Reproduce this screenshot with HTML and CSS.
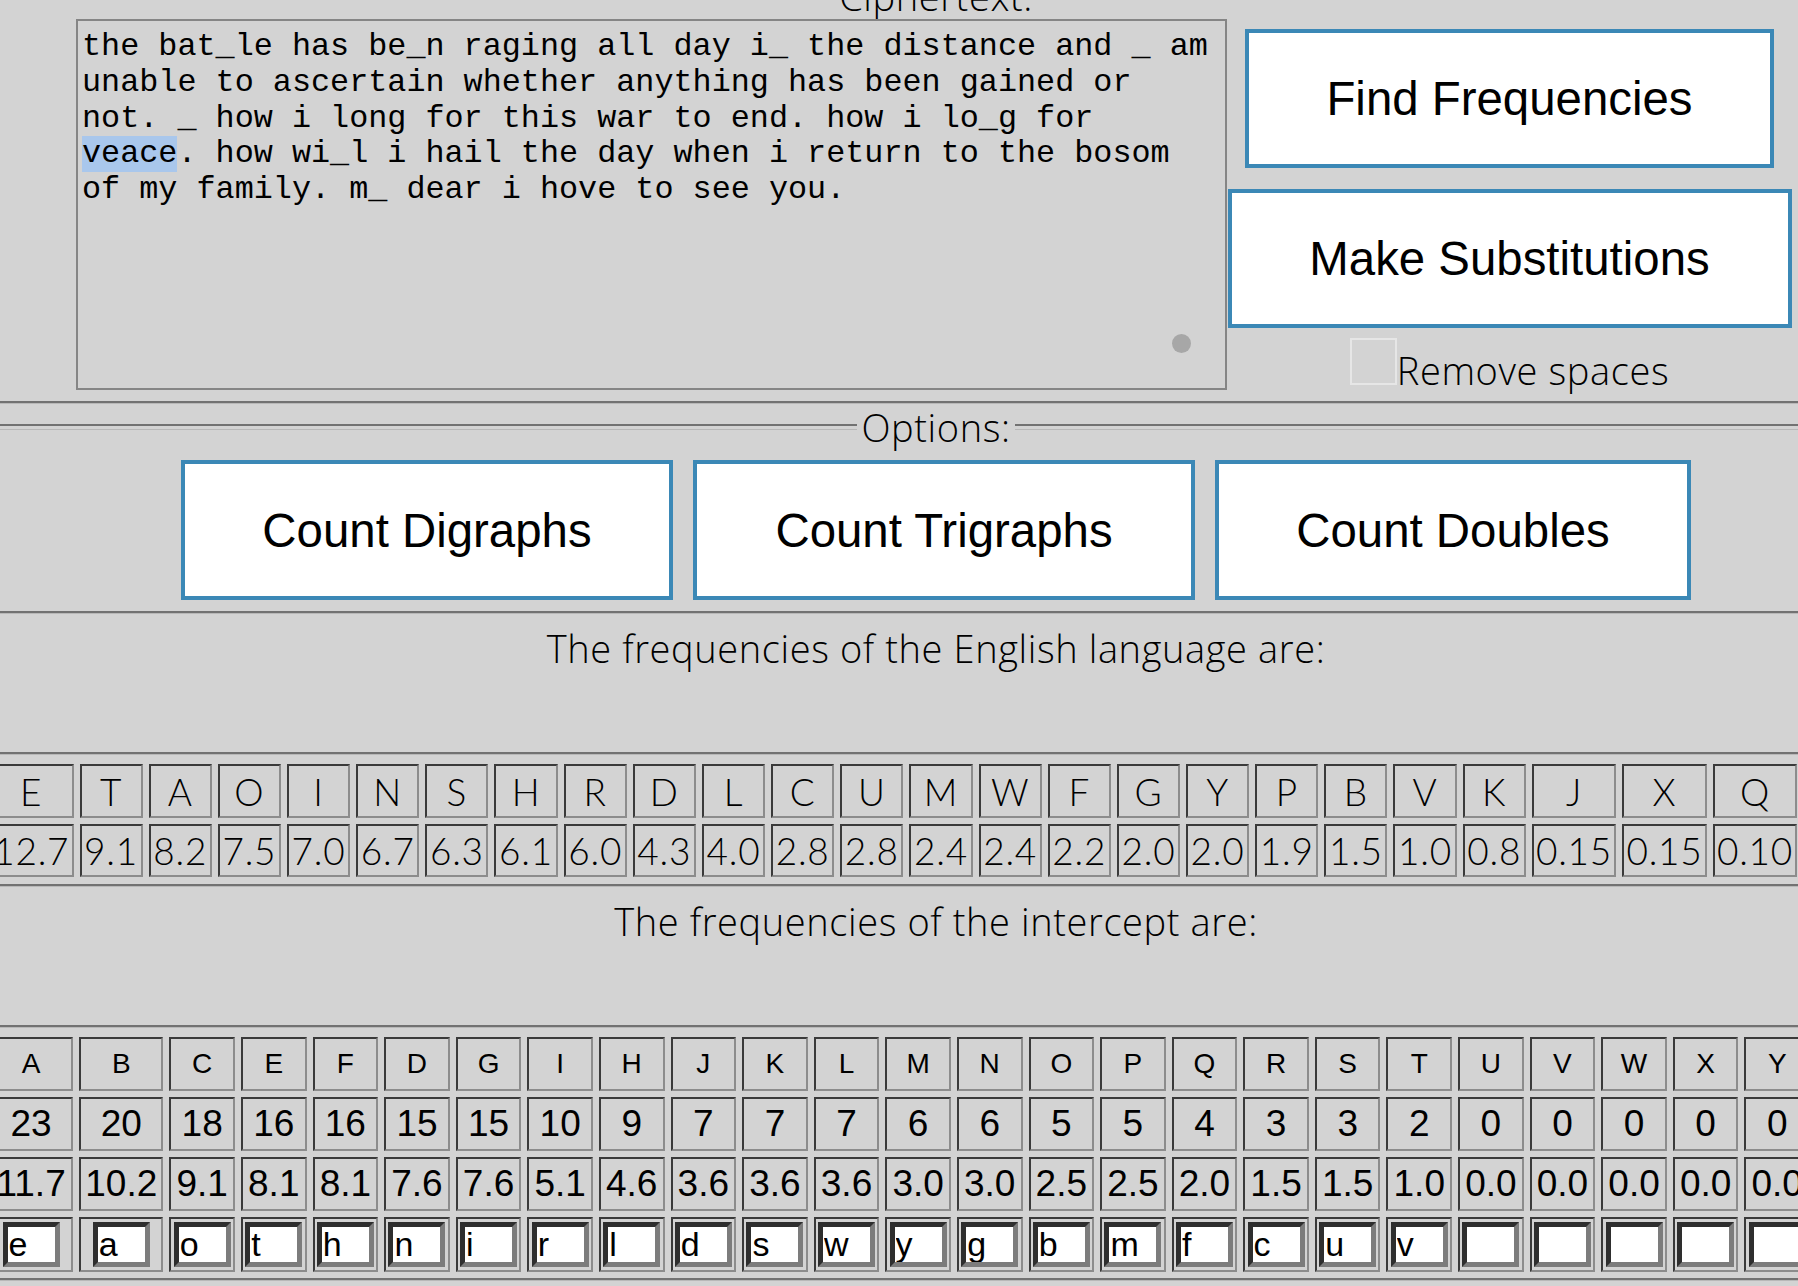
FILE: index.html
```html
<!DOCTYPE html>
<html lang="en">
<head>
<meta charset="utf-8">
<title>Frequency Analysis</title>
<link rel="stylesheet" href="styles.css">
</head>
<body>
<div class="page">
  <section class="cipher">
    <div class="legend">Ciphertext:</div>
    <div class="cipher-row">
      <div class="textbox" role="textbox" aria-multiline="true">
        <div class="textbox-text">the bat_le has be_n raging all day i_ the distance and _ am
unable to ascertain whether anything has been gained or
not. _ how i long for this war to end. how i lo_g for
<span class="sel">veace</span>. how wi_l i hail the day when i return to the bosom
of my family. m_ dear i hove to see you.</div>
        <span class="handle"></span>
      </div>
      <div class="side">
        <button class="btn btn-find">Find Frequencies</button>
        <button class="btn btn-make">Make Substitutions</button>
        <label class="remove"><input type="checkbox" class="check">Remove spaces</label>
      </div>
    </div>
  </section>
  <div class="rule"></div>
  <section class="options">
    <div class="legend-row"><span class="legend-text">Options:</span></div>
    <div class="opt-buttons">
      <button class="btn btn-di">Count Digraphs</button>
      <button class="btn btn-tri">Count Trigraphs</button>
      <button class="btn btn-dbl">Count Doubles</button>
    </div>
  </section>
  <div class="rule"></div>
  <p class="caption">The frequencies of the English language are:</p>
  <div class="rule"></div>
  <table class="freq eng">
    <tr>
      <td class="wide">E</td><td>T</td><td>A</td><td>O</td><td>I</td><td>N</td><td>S</td><td>H</td><td>R</td><td>D</td><td>L</td><td>C</td><td>U</td><td>M</td><td>W</td><td>F</td><td>G</td><td>Y</td><td>P</td><td>B</td><td>V</td><td>K</td><td class="wide">J</td><td class="wide">X</td><td class="wide">Q</td><td class="wide">Z</td>
    </tr>
    <tr class="val">
      <td>12.7</td><td>9.1</td><td>8.2</td><td>7.5</td><td>7.0</td><td>6.7</td><td>6.3</td><td>6.1</td><td>6.0</td><td>4.3</td><td>4.0</td><td>2.8</td><td>2.8</td><td>2.4</td><td>2.4</td><td>2.2</td><td>2.0</td><td>2.0</td><td>1.9</td><td>1.5</td><td>1.0</td><td>0.8</td><td>0.15</td><td>0.15</td><td>0.10</td><td>0.07</td>
    </tr>
  </table>
  <div class="rule"></div>
  <p class="caption">The frequencies of the intercept are:</p>
  <div class="rule"></div>
  <table class="freq int">
    <tr class="head">
      <td class="wide">A</td><td class="wide">B</td><td>C</td><td>E</td><td>F</td><td>D</td><td>G</td><td>I</td><td>H</td><td>J</td><td>K</td><td>L</td><td>M</td><td>N</td><td>O</td><td>P</td><td>Q</td><td>R</td><td>S</td><td>T</td><td>U</td><td>V</td><td>W</td><td>X</td><td>Y</td><td>Z</td>
    </tr>
    <tr class="num">
      <td>23</td><td>20</td><td>18</td><td>16</td><td>16</td><td>15</td><td>15</td><td>10</td><td>9</td><td>7</td><td>7</td><td>7</td><td>6</td><td>6</td><td>5</td><td>5</td><td>4</td><td>3</td><td>3</td><td>2</td><td>0</td><td>0</td><td>0</td><td>0</td><td>0</td><td>0</td>
    </tr>
    <tr class="num">
      <td>11.7</td><td>10.2</td><td>9.1</td><td>8.1</td><td>8.1</td><td>7.6</td><td>7.6</td><td>5.1</td><td>4.6</td><td>3.6</td><td>3.6</td><td>3.6</td><td>3.0</td><td>3.0</td><td>2.5</td><td>2.5</td><td>2.0</td><td>1.5</td><td>1.5</td><td>1.0</td><td>0.0</td><td>0.0</td><td>0.0</td><td>0.0</td><td>0.0</td><td>0.0</td>
    </tr>
    <tr class="subs">
      <td><input class="sub" value="e"></td><td><input class="sub" value="a"></td><td><input class="sub" value="o"></td><td><input class="sub" value="t"></td><td><input class="sub" value="h"></td><td><input class="sub" value="n"></td><td><input class="sub" value="i"></td><td><input class="sub" value="r"></td><td><input class="sub" value="l"></td><td><input class="sub" value="d"></td><td><input class="sub" value="s"></td><td><input class="sub" value="w"></td><td><input class="sub" value="y"></td><td><input class="sub" value="g"></td><td><input class="sub" value="b"></td><td><input class="sub" value="m"></td><td><input class="sub" value="f"></td><td><input class="sub" value="c"></td><td><input class="sub" value="u"></td><td><input class="sub" value="v"></td><td><input class="sub" value=""></td><td><input class="sub" value=""></td><td><input class="sub" value=""></td><td><input class="sub" value=""></td><td><input class="sub" value=""></td><td><input class="sub" value=""></td>
    </tr>
  </table>
  <div class="rule"></div>
</div>
</body>
</html>
```

FILE: styles.css
```css
* { box-sizing: border-box; }

html, body {
  margin: 0;
  padding: 0;
  background: #d3d3d3;
  overflow: hidden;
}

.page {
  width: 1872px;
  font-family: "Open Sans", Lato, sans-serif;
  font-weight: 300;
  color: #000;
}

/* ---------- ciphertext ---------- */
.legend {
  margin-top: -25px;
  height: 43px;
  line-height: 43px;
  font-size: 38px;
  letter-spacing: 0.6px;
  text-align: center;
}

.cipher-row {
  margin-top: 1px;
  display: flex;
  justify-content: center;
  padding-right: 4px;
  height: 371px;
}

.textbox {
  position: relative;
  flex-shrink: 0;
  width: 1151px;
  height: 371px;
  border: 2px solid #858585;
  background: #d3d3d3;
  padding: 9px 4px 5px;
}

.textbox-text {
  font-family: "Liberation Mono", "Courier New", monospace;
  font-size: 31.8px;
  line-height: 35.8px;
  white-space: pre;
  color: #000;
}

.sel { background: #a9c7ec; }

.handle {
  position: absolute;
  right: 34px;
  bottom: 35px;
  width: 19px;
  height: 19px;
  border-radius: 50%;
  background: #a7a7a7;
}

.side {
  flex-shrink: 0;
  width: 565px;
  display: flex;
  flex-direction: column;
  align-items: center;
  padding-top: 10px;
}

.side > * { flex-shrink: 0; }

.btn {
  display: flex;
  align-items: center;
  justify-content: center;
  flex-shrink: 0;
  background: #fff;
  border: 4px solid #3b88b6;
  font-family: "Liberation Sans", Arial, sans-serif;
  font-weight: 400;
  font-size: 47.4px;
  letter-spacing: 0;
  color: #000;
  padding: 0;
  margin: 0;
  white-space: nowrap;
}

.btn-find { width: 529px; height: 139px; }
.btn-make { width: 564px; height: 139px; margin-top: 21px; }

.remove {
  margin-top: 10px;
  font-size: 38px;
  letter-spacing: 0.6px;
  line-height: normal;
  white-space: nowrap;
}

.check {
  -webkit-appearance: none;
  appearance: none;
  display: inline-block;
  vertical-align: baseline;
  width: 47px;
  height: 47px;
  margin: 0;
  border: 2px solid #e6e6e6;
  background: transparent;
}

/* ---------- rules ---------- */
.rule {
  height: 3px;
  border-top: 2px solid #727272;
  border-bottom: 1px solid #b8b8b8;
}

.cipher + .rule { margin-top: 11px; }

/* ---------- options ---------- */
.legend-row {
  display: flex;
  align-items: center;
  height: 46px;
  line-height: 46px;
  font-size: 38px;
  letter-spacing: 0.6px;
  gap: 4px;
}

.legend-row::before,
.legend-row::after {
  content: "";
  flex: 1;
  height: 3px;
  border-top: 2px solid #727272;
  border-bottom: 1px solid #b8b8b8;
}

.opt-buttons {
  margin-top: 10px;
  display: flex;
  justify-content: center;
  gap: 20px;
}

.btn-di { width: 492px; height: 140px; }
.btn-tri { width: 502px; height: 140px; }
.btn-dbl { width: 476px; height: 140px; }

.options + .rule { margin-top: 11px; }

/* ---------- captions ---------- */
.caption {
  margin: 13px 0 82px;
  height: 43px;
  line-height: 43px;
  font-size: 38px;
  letter-spacing: 0.6px;
  text-align: center;
}

/* ---------- tables ---------- */
.freq {
  width: max-content;
  margin-left: -17px;
  margin-right: -300px;
  margin-top: 3px;
  border-collapse: separate;
  border-spacing: 6px;
}

.freq td {
  padding: 0;
  text-align: center;
  vertical-align: middle;
  background: #d3d3d3;
  border-top: 2px solid #3a3a3a;
  border-left: 2px solid #3a3a3a;
  border-right: 2px solid #8c8c8c;
  border-bottom: 2px solid #8c8c8c;
  white-space: nowrap;
}

.eng {
  font-family: Lato, sans-serif;
  font-weight: 300;
  font-size: 37px;
  letter-spacing: 0.8px;
}
.eng td { width: 63.16px; height: 54px; }
.eng td.wide { width: 84.5px; }
.eng tr.val td { height: 53px; }
.eng + .rule { margin-top: 1px; }

.int {
  font-family: "Liberation Sans", Arial, sans-serif;
  font-weight: 400;
}
.int td { width: 65.6px; height: 54px; }
.int td.wide { width: 84.2px; }
.int tr.head td { font-size: 28px; }
.int tr.num td { font-size: 37px; }
.int tr.subs td { height: 55px; }

.sub {
  display: block;
  margin: 0 auto;
  width: 57px;
  height: 45px;
  padding: 0 1px;
  border-style: solid;
  border-width: 5px;
  border-color: #2e2e2e #7c7c7c #7c7c7c #2e2e2e;
  background: #fff;
  font-family: "Liberation Sans", Arial, sans-serif;
  font-size: 34px;
  color: #000;
  outline: none;
}
```
